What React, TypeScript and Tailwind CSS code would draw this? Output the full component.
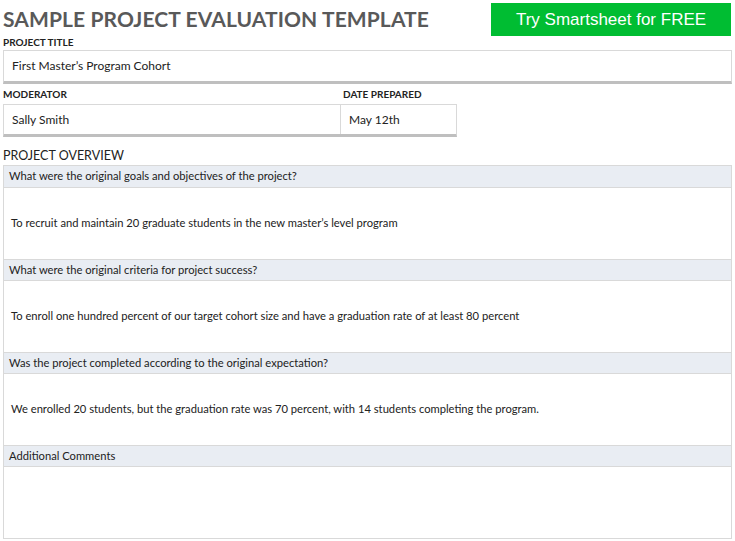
export default function App() {
  const sections = [
    ["What were the original goals and objectives of the project?", "To recruit and maintain 20 graduate students in the new master’s level program"],
    ["What were the original criteria for project success?", "To enroll one hundred percent of our target cohort size and have a graduation rate of at least 80 percent"],
    ["Was the project completed according to the original expectation?", "We enrolled 20 students, but the graduation rate was 70 percent, with 14 students completing the program."],
    ["Additional Comments", ""],
  ];
  return (
    <div className="w-[735px] h-[541px] overflow-hidden bg-white text-[#222] text-[11.2px]" style={{ fontFamily: "Lato, 'Open Sans', sans-serif" }}>
      <div className="flex items-start justify-between pl-[3px] pr-[4px] pt-[3px]">
        <div className="text-[21px] font-bold text-[#595959] tracking-[0.1px] leading-[32px]">SAMPLE PROJECT EVALUATION TEMPLATE</div>
        <div className="w-[240px] h-[33px] bg-[#00bd32] text-white text-[17px] flex items-center justify-center" style={{ fontFamily: "'Liberation Sans', Arial, sans-serif" }}>Try Smartsheet for FREE</div>
      </div>
      <div className="px-[3px] font-bold text-[10px] leading-[16px] -mt-[2px]">PROJECT TITLE</div>
      <div className="mx-[3px] h-[34px] border border-[#d9d9d9] border-b-[3px] border-b-[#bfbfbf] flex items-center px-[8px] text-[12px]">First Master’s Program Cohort</div>
      <div className="flex px-[3px] font-bold text-[10px] leading-[20px]">
        <div className="w-[340px]">MODERATOR</div>
        <div>DATE PREPARED</div>
      </div>
      <div className="flex mx-[3px] w-[454px] h-[33px] border border-[#d9d9d9] border-b-[3px] border-b-[#bfbfbf] text-[12px]">
        <div className="w-[337px] border-r border-[#d9d9d9] flex items-center px-[8px]">Sally Smith</div>
        <div className="flex-1 flex items-center px-[8px]">May 12th</div>
      </div>
      <div className="px-[3px] text-[12.5px] mt-[10px] leading-[18px]">PROJECT OVERVIEW</div>
      <div className="mx-[3px] border border-[#d9d9d9]">
        {sections.map(([q, a], i) => (
          <div key={i}>
            <div className={`h-[22px] bg-[#e9edf3] border-b border-[#d9d9d9] flex items-center px-[5px] ${i > 0 ? "border-t" : ""}`}>{q}</div>
            <div className="h-[71px] flex items-center px-[7px]">{a}</div>
          </div>
        ))}
      </div>
    </div>
  );
}
